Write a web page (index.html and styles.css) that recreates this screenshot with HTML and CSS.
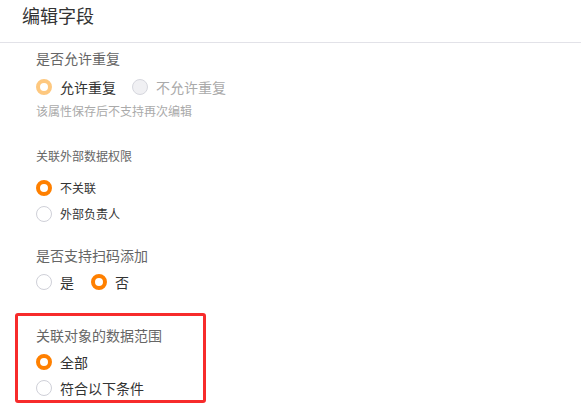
FILE: index.html
```html
<!DOCTYPE html>
<html lang="zh">
<head>
<meta charset="utf-8">
<title>编辑字段</title>
<link rel="stylesheet" href="styles.css">
</head>
<body>
<div class="header"><div class="title">编辑字段</div></div>
<div class="content">
  <div class="group g1">
    <div class="label">是否允许重复</div>
    <div class="row r-first">
      <label class="opt"><span class="radio checked disabled"></span><span class="txt">允许重复</span></label>
      <label class="opt"><span class="radio disabled"></span><span class="txt muted">不允许重复</span></label>
    </div>
    <div class="hint">该属性保存后不支持再次编辑</div>
  </div>
  <div class="group g2">
    <div class="label small">关联外部数据权限</div>
    <div class="row r-first small-row">
      <label class="opt"><span class="radio checked"></span><span class="txt small">不关联</span></label>
    </div>
    <div class="row r-next small-row">
      <label class="opt"><span class="radio"></span><span class="txt small">外部负责人</span></label>
    </div>
  </div>
  <div class="group g3">
    <div class="label">是否支持扫码添加</div>
    <div class="row r-first">
      <label class="opt"><span class="radio"></span><span class="txt">是</span></label>
      <label class="opt"><span class="radio checked"></span><span class="txt">否</span></label>
    </div>
  </div>
  <div class="group g4 highlight">
    <div class="label">关联对象的数据范围</div>
    <div class="row r-first">
      <label class="opt"><span class="radio checked"></span><span class="txt">全部</span></label>
    </div>
    <div class="row r-next">
      <label class="opt"><span class="radio"></span><span class="txt">符合以下条件</span></label>
    </div>
  </div>
</div>
</body>
</html>
```
FILE: styles.css
```css
* { box-sizing: border-box; }
html, body { margin: 0; padding: 0; background: #fff; }
body {
  width: 581px;
  height: 407px;
  overflow: hidden;
  font-family: "Noto Sans CJK SC", "Noto Sans", sans-serif;
  color: #333;
}
.header {
  height: 43px;
  border-bottom: 1px solid #e2e2e8;
  padding: 3px 0 0 22px;
}
.title {
  font-size: 18px;
  line-height: 24px;
  color: #333;
}
.content { padding-left: 36px; }
.label {
  font-size: 14px;
  line-height: 20px;
  color: #666;
}
.label.small { font-size: 12px; line-height: 16px; }
.row {
  display: flex;
  align-items: center;
  height: 20px;
}
.opt {
  display: flex;
  align-items: center;
  margin-right: 16px;
}
.radio {
  width: 16px;
  height: 16px;
  border-radius: 50%;
  border: 1px solid #cfd0d8;
  background: #fff;
  flex: none;
}
.radio.disabled { background: #f0f0f3; border-color: #d6d7de; }
.radio.checked { border: 4.5px solid #ff8000; background: #fff; }
.radio.checked.disabled { border-color: #fec87f; background: #fff; }
.txt {
  margin-left: 8px;
  font-size: 14px;
  line-height: 20px;
  color: #333;
}
.txt.small { font-size: 12px; }
.txt.muted { color: #aaa; }
.hint {
  margin-top: 6px;
  font-size: 12px;
  line-height: 16px;
  color: #aaa;
}
.g1 { padding-top: 5px; }
.g1 .r-first { margin-top: 9px; }
.g2 { margin-top: 29px; }
.g2 .r-first { margin-top: 14px; }
.r-next { margin-top: 6px; }
.g3 { margin-top: 21px; }
.g3 .r-first { margin-top: 7px; }
.g3 .opt { margin-right: 17px; }
.g4 .r-first { margin-top: 7px; }
.highlight {
  margin-top: 21px;
  margin-left: -21px;
  width: 191px;
  height: 90px;
  border: 3px solid #f72b2b;
  border-radius: 3px;
  padding: 9px 0 0 18px;
}
```
